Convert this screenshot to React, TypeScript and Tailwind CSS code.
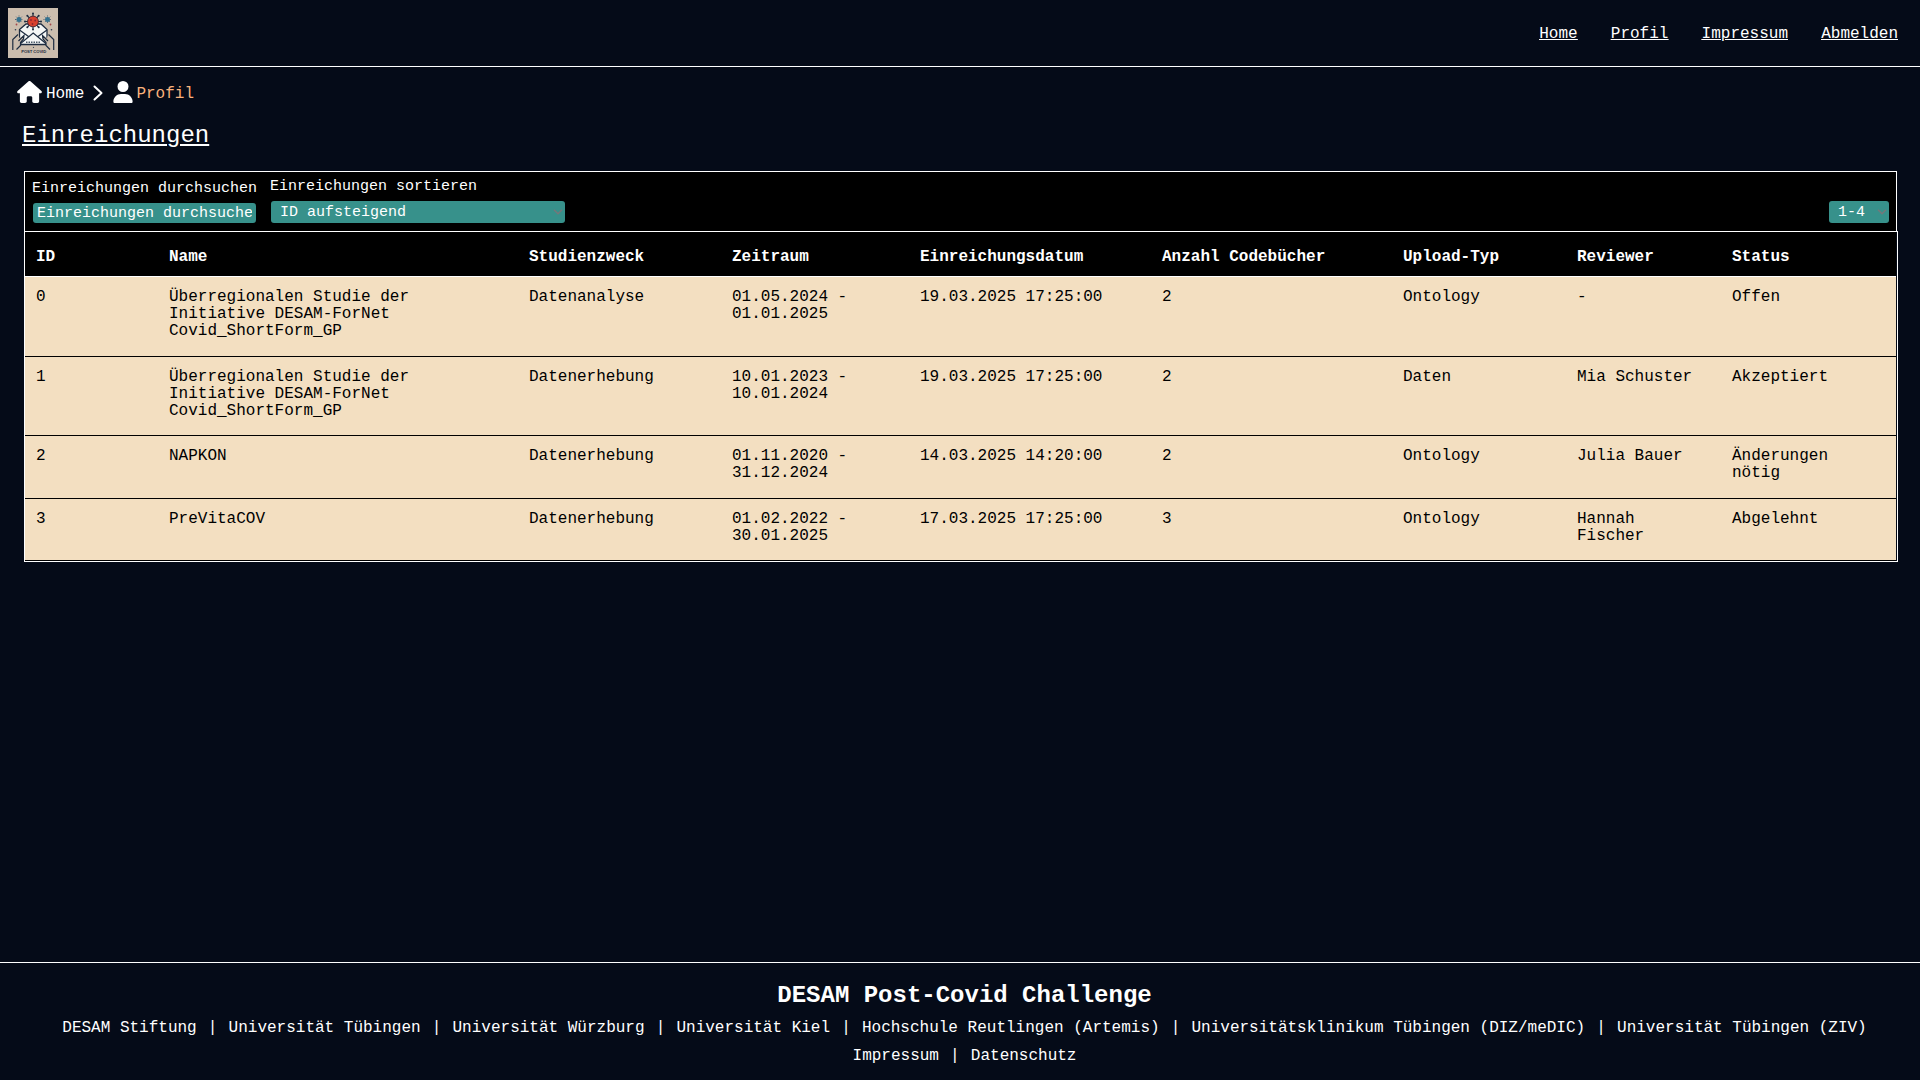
import React from "react";
import { FaHouse, FaUser } from "react-icons/fa6";

const COLS =
  "grid grid-cols-[133px_360px_203px_188px_242px_241px_174px_155px_164px] pl-[11px]";

const headers = [
  "ID",
  "Name",
  "Studienzweck",
  "Zeitraum",
  "Einreichungsdatum",
  "Anzahl Codebücher",
  "Upload-Typ",
  "Reviewer",
  "Status",
];

const STUDY = "Überregionalen Studie der Initiative DESAM-ForNet Covid_ShortForm_GP";

const rows = [
  { h: "h-[80px]", cells: ["0", STUDY, "Datenanalyse", "01.05.2024 - 01.01.2025", "19.03.2025 17:25:00", "2", "Ontology", "-", "Offen"] },
  { h: "h-[79px]", cells: ["1", STUDY, "Datenerhebung", "10.01.2023 - 10.01.2024", "19.03.2025 17:25:00", "2", "Daten", "Mia Schuster", "Akzeptiert"] },
  { h: "h-[63px]", cells: ["2", "NAPKON", "Datenerhebung", "01.11.2020 - 31.12.2024", "14.03.2025 14:20:00", "2", "Ontology", "Julia Bauer", "Änderungen nötig"] },
  { h: "h-[62px]", cells: ["3", "PreVitaCOV", "Datenerhebung", "01.02.2022 - 30.01.2025", "17.03.2025 17:25:00", "3", "Ontology", "Hannah Fischer", "Abgelehnt"] },
];

const partners = [
  "DESAM Stiftung",
  "Universität Tübingen",
  "Universität Würzburg",
  "Universität Kiel",
  "Hochschule Reutlingen (Artemis)",
  "Universitätsklinikum Tübingen (DIZ/meDIC)",
  "Universität Tübingen (ZIV)",
];

function Logo() {
  return (
    <svg viewBox="0 0 50 50" className="size-[50px]">
      <rect width="50" height="50" fill="#cbbdae" />
      <g stroke="#33485c" strokeWidth="0.8" strokeDasharray="1 0.6">
        <path d="M11 7.500v8M7 11.500h8M8.200 8.700l5.600 5.600M13.800 8.700l-5.600 5.600M39.500 7.500v8M35.500 11.500h8M36.700 8.700l5.600 5.600M42.300 8.700l-5.600 5.600" />
      </g>
      <circle cx="11" cy="11.500" r="2.500" fill="#34718f" />
      <circle cx="39.500" cy="11.500" r="2.500" fill="#34718f" />
      <path d="M11.500 21.500 L18 16 H33 L39 21.500 V36.500 H11.500Z" fill="#f4f6f6" stroke="#1d2c40" strokeWidth="1.300" />
      <path d="M11.500 22 L20.500 28.500 M39 22 L30 28.500 M12 36 L25.200 25 L38.500 36" fill="none" stroke="#1d2c40" strokeWidth="1.200" />
      <g stroke="#1d2c40" strokeWidth="1.100">
        <path d="M25 5.500v16M17 13.500h16M19.500 8l11 11M30.500 8l-11 11" />
      </g>
      <g fill="#1d2c40">
        <circle cx="25" cy="5.500" r="1" />
        <circle cx="25" cy="21.500" r="1" />
        <circle cx="17" cy="13.500" r="1" />
        <circle cx="33" cy="13.500" r="1" />
        <circle cx="19.300" cy="7.800" r="1" />
        <circle cx="30.700" cy="7.800" r="1" />
        <circle cx="19.300" cy="19.200" r="1" />
        <circle cx="30.700" cy="19.200" r="1" />
      </g>
      <circle cx="25" cy="13.500" r="5.400" fill="#d9412f" stroke="#3d2633" strokeWidth="0.900" />
      <g fill="#8b2630">
        <circle cx="23" cy="12" r="0.900" />
        <circle cx="27.200" cy="12.500" r="0.900" />
        <circle cx="24.500" cy="16" r="0.900" />
      </g>
      <path d="M4.800 42 V31.500 L10 26 L11.500 30 L16 27.500 L15.500 31 L12.500 34.500 V37.500 L8.500 42Z M45.700 42 V31.500 L40.500 26 L39 30 L34.500 27.500 L35 31 L38 34.500 V37.500 L42 42Z" fill="#cbbdae" />
      <path d="M4.800 42 V31.500 L10 26.500 M10.500 33 L16 27.500 L15.500 31 L12.500 34.500 V37.500 L8.500 41.500 M45.700 42 V31.500 L40.500 26.500 M40 33 L34.500 27.500 L35 31 L38 34.500 V37.500 L42 41.500" fill="none" stroke="#1d2c40" strokeWidth="1.200" />
      <path d="M18 34.200H33" stroke="#4b5a69" strokeWidth="1.500" strokeDasharray="1.500 1" />
      <g fill="#a4464a">
        <circle cx="8.500" cy="16.500" r="0.900" />
        <circle cx="42.500" cy="16.500" r="0.900" />
      </g>
      <g fill="#26384e">
        <circle cx="7.500" cy="21.700" r="0.800" />
        <circle cx="43.500" cy="21.700" r="0.800" />
        <circle cx="25.500" cy="39.300" r="0.600" />
      </g>
      <text x="25.700" y="44.800" fontSize="4.200" fontWeight="700" textAnchor="middle" textLength="25" fill="#1d2c40" fontFamily="Liberation Sans, sans-serif">
        POST COVID
      </text>
    </svg>
  );
}

function Chevron() {
  return (
    <svg viewBox="0 0 10 6" className="h-[6px] w-[10px]" fill="none" stroke="#75777a" strokeWidth="1.5">
      <path d="M1 0.700 L5 4.700 L9 0.700" />
    </svg>
  );
}

function Select({ label, size }: { label: string; size: string }) {
  return (
    <div className={`flex h-[22px] items-center justify-between rounded-[3px] bg-[#37918b] pl-[9px] pr-[2px] text-[15px] leading-[22px] ${size}`}>
      <span className="pt-px">{label}</span>
      <Chevron />
    </div>
  );
}

function LinkRow({ items }: { items: string[] }) {
  return (
    <div className="flex justify-center gap-[11.15px] whitespace-nowrap leading-[18px]">
      {items.map((p, i) => (
        <React.Fragment key={i}>
          {i > 0 && <span>|</span>}
          <a>{p}</a>
        </React.Fragment>
      ))}
    </div>
  );
}

export default function App() {
  return (
    <div className="flex h-[1080px] w-[1920px] flex-col overflow-hidden bg-[#050b18] font-['Liberation_Mono',monospace] text-[16px] text-white">
      <header className="flex h-[67px] shrink-0 items-center justify-between border-b border-white pl-2 pr-[22px]">
        <Logo />
        <nav className="flex gap-[33.2px] pt-[2px] leading-[18px] underline">
          <a>Home</a>
          <a>Profil</a>
          <a>Impressum</a>
          <a>Abmelden</a>
        </nav>
      </header>

      <main className="grow">
        <div className="flex h-[50px] items-center pl-[17px]">
          <FaHouse className="h-[22px] w-[25px]" />
          <span className="ml-1 pt-[3px]">Home</span>
          <svg viewBox="0 0 10 16" className="ml-[9px] mt-[2px] h-4 w-[10px]" fill="none" stroke="#fff" strokeWidth="2" strokeLinecap="round" strokeLinejoin="round">
            <path d="M1.500 1.500 L8.500 8 L1.500 14.500" />
          </svg>
          <FaUser className="ml-[10px] h-[22px] w-[20px]" />
          <span className="ml-[3px] pt-[3px] text-[#f9b27c]">Profil</span>
        </div>
        <h1 className="ml-[22px] mt-[4px] h-[50px] pt-px text-[24px] leading-[27px] underline decoration-2 underline-offset-[2px]">Einreichungen</h1>

        <section className="ml-6">
          <div className="flex h-[60px] w-[1873px] justify-between border border-b-0 border-white bg-black pl-[7px] pr-[7px]">
            <div className="flex">
              <div className="w-[238px] pt-[8px] text-[15px] leading-[17px]">
                <div>Einreichungen durchsuchen</div>
                <div className="ml-px mt-[6px] h-5 w-[223px] overflow-hidden whitespace-nowrap rounded-[3px] bg-[#37918b] px-1 leading-[21px]">
                  <div className="overflow-hidden">Einreichungen durchsuchen</div>
                </div>
              </div>
              <div className="pt-[6px] text-[15px] leading-[17px]">
                <div>Einreichungen sortieren</div>
                <div className="ml-px mt-[6px]">
                  <Select label="ID aufsteigend" size="w-[294px]" />
                </div>
              </div>
            </div>
            <div className="pt-[29px]">
              <Select label="1-4" size="w-[60px]" />
            </div>
          </div>

          <div className="w-[1874px] border border-white pr-px leading-[17px]">
            <div className={`${COLS} h-[45px] overflow-hidden border-b border-white bg-black pt-[17px] font-bold`}>
              {headers.map((h) => (
                <div key={h}>{h}</div>
              ))}
            </div>
            {rows.map((r) => (
              <div key={r.cells[0]} className={`${COLS} ${r.h} overflow-hidden border-b border-black bg-[#f3dfc1] pt-[12px] text-black`}>
                {r.cells.map((c, i) => (
                  <div key={i} className="pr-[22px]">{c}</div>
                ))}
              </div>
            ))}
          </div>
        </section>
      </main>

      <footer className="h-[118px] shrink-0 border-t border-white pl-[9px] pt-[19px] text-center">
        <h2 className="text-[24px] font-bold leading-[27px]">DESAM Post-Covid Challenge</h2>
        <div className="mt-[10px]">
          <LinkRow items={partners} />
        </div>
        <div className="mt-[10px]">
          <LinkRow items={["Impressum", "Datenschutz"]} />
        </div>
      </footer>
    </div>
  );
}
